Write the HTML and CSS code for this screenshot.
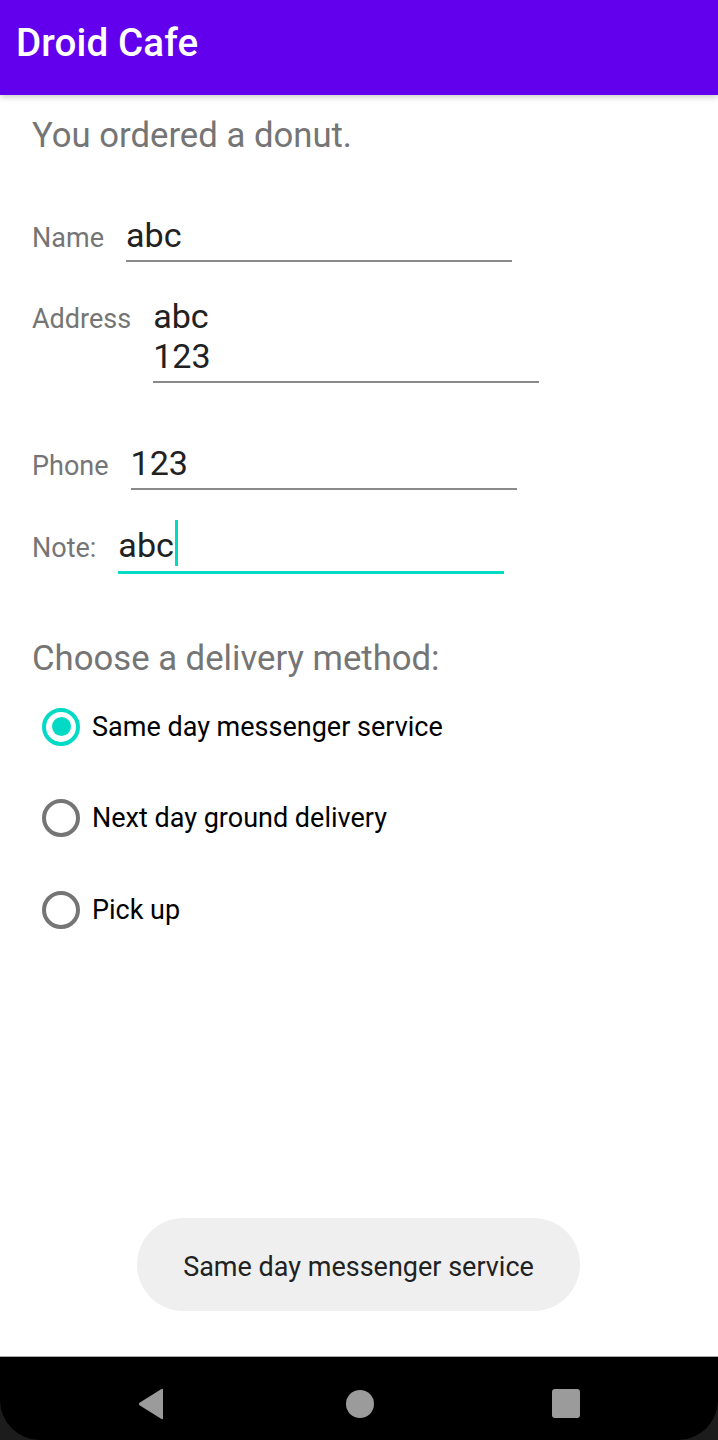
FILE: index.html
```html
<!DOCTYPE html>
<html lang="en">
<head>
<meta charset="utf-8">
<title>Droid Cafe</title>
<link rel="stylesheet" href="styles.css">
</head>
<body>
<div class="screen">
  <header class="appbar">
    <h1 class="appbar-title">Droid Cafe</h1>
  </header>
  <main class="content">
    <p class="intro">You ordered a donut.</p>
    <div class="form">
      <div class="row row-name">
        <span class="label">Name</span>
        <div class="field"><span class="value">abc</span></div>
      </div>
      <div class="row row-address">
        <span class="label">Address</span>
        <div class="field"><span class="value">abc<br>123</span></div>
      </div>
      <div class="row row-phone">
        <span class="label">Phone</span>
        <div class="field"><span class="value">123</span></div>
      </div>
      <div class="row row-note">
        <span class="label">Note:</span>
        <div class="field field-focused"><span class="value">abc</span><span class="cursor"></span></div>
      </div>
    </div>
    <p class="heading">Choose a delivery method:</p>
    <div class="radios">
      <div class="radio-row">
        <span class="radio radio-checked"><span class="radio-dot"></span></span>
        <span class="radio-text">Same day messenger service</span>
      </div>
      <div class="radio-row">
        <span class="radio"></span>
        <span class="radio-text">Next day ground delivery</span>
      </div>
      <div class="radio-row">
        <span class="radio"></span>
        <span class="radio-text">Pick up</span>
      </div>
    </div>
  </main>
  <div class="toast">Same day messenger service</div>
  <nav class="navbar">
    <div class="navbar-inner">
      <svg class="nav-icon" width="28" height="32" viewBox="0 0 28 32"><path d="M26 2 L26 30 Q26 32 24.5 31 L2.5 17.2 Q1 16 2.5 14.8 L24.5 1 Q26 0 26 2 Z" fill="#9b9b9b"/></svg>
      <span class="nav-home"></span>
      <span class="nav-recent"></span>
    </div>
  </nav>
</div>
</body>
</html>
```

FILE: styles.css
```css
* { box-sizing: border-box; }
html, body { margin: 0; padding: 0; }
body {
  font-family: Roboto, "Noto Sans", "Liberation Sans", sans-serif;
  background: #ffffff;
}
.screen {
  width: 718px;
  height: 1440px;
  display: flex;
  flex-direction: column;
  position: relative;
  overflow: hidden;
}
.appbar {
  height: 95px;
  background: #6200ee;
  padding: 21px 0 0 16px;
  box-shadow: 0 2px 6px rgba(0,0,0,0.22);
  position: relative;
  z-index: 1;
  flex-shrink: 0;
}
.appbar-title {
  margin: 0;
  color: #ffffff;
  font-size: 38.6px;
  font-weight: 500;
  line-height: 44px;
  letter-spacing: 0.1px;
}
.content {
  flex: 1;
  padding-left: 32px;
}
.intro {
  margin: 20px 0 0;
  font-size: 34.7px;
  line-height: 40px;
  color: #757575;
}
.form {
  margin-top: 60px;
  display: flex;
  flex-direction: column;
}
.row {
  display: flex;
  align-items: baseline;
  gap: 22px;
}
.row-address { margin-top: 34px; }
.row-phone { margin-top: 60px; }
.row-note { margin-top: 35px; }
.label {
  font-size: 27px;
  color: #757575;
}
.field {
  width: 386px;
  font-size: 34.1px;
  line-height: 40px;
  color: #212121;
  padding-bottom: 5px;
  border-bottom: 2px solid #8a8a8a;
  display: flex;
  align-items: flex-start;
}
.field-focused {
  border-bottom: 3px solid #03dac5;
  padding-bottom: 5px;
}
.cursor {
  display: inline-block;
  width: 3.5px;
  height: 46px;
  background: #03dac5;
  margin-top: -5px;
  margin-left: 1px;
}
.heading {
  margin: 64px 0 0;
  font-size: 34.7px;
  line-height: 40px;
  color: #757575;
}
.radios {
  margin-top: 3px;
  padding-left: 10px;
}
.radio-row {
  height: 91.5px;
  display: flex;
  align-items: center;
  gap: 12px;
}
.radio {
  width: 38px;
  height: 38px;
  border-radius: 50%;
  border: 4px solid #757575;
  display: flex;
  align-items: center;
  justify-content: center;
  flex-shrink: 0;
}
.radio-checked { border-color: #03dac5; }
.radio-dot {
  width: 19px;
  height: 19px;
  border-radius: 50%;
  background: #03dac5;
}
.radio-text {
  font-size: 27px;
  line-height: 32px;
  color: #000000;
}
.toast {
  position: absolute;
  left: 137px;
  top: 1218px;
  width: 443px;
  height: 93px;
  border-radius: 47px;
  background: #efefef;
  color: #222222;
  font-size: 27px;
  padding-top: 4px;
  display: flex;
  align-items: center;
  justify-content: center;
}
.navbar {
  height: 84px;
  flex-shrink: 0;
  background: #1c1c1c;
  border-top: 1px solid #a8a8a8;
}
.navbar-inner {
  height: 100%;
  background: #000000;
  border-radius: 0 0 40px 40px;
  position: relative;
}
.nav-icon {
  position: absolute;
  left: 137px;
  top: 31px;
}
.nav-home {
  position: absolute;
  left: 346px;
  top: 33px;
  width: 28px;
  height: 28px;
  border-radius: 50%;
  background: #9b9b9b;
}
.nav-recent {
  position: absolute;
  left: 552px;
  top: 32px;
  width: 28px;
  height: 29px;
  border-radius: 3px;
  background: #9b9b9b;
}
```
